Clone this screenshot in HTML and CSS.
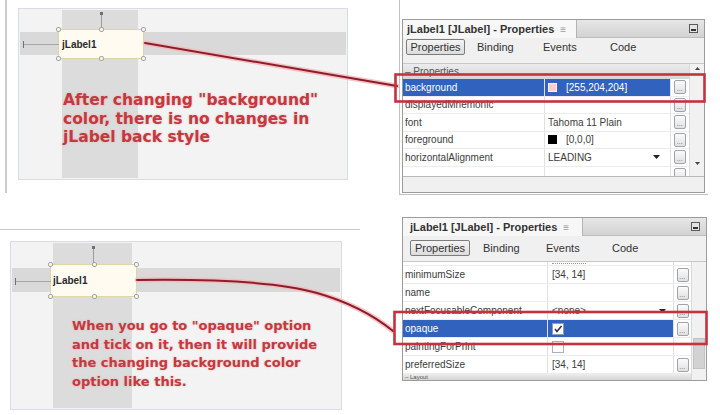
FILE: index.html
```html
<!DOCTYPE html>
<html lang="en">
<head>
<meta charset="utf-8">
<title>jLabel background and opaque</title>
<link rel="stylesheet" href="styles.css">
</head>
<body>
<main class="shot">
  <section class="half">
    <div class="left-a">
      <div class="form form-a">
        <div class="col"></div>
        <div class="band"></div>
        <div class="jlabel">
          <span class="jl-text">jLabel1</span>
          <i class="anc-v"></i><i class="anc-h"></i>
          <i class="hd tl"></i><i class="hd tc"></i><i class="hd tr"></i>
          <i class="hd bl"></i><i class="hd bc"></i><i class="hd br"></i>
        </div>
        <p class="note">After changing "background"<br>color, there is no changes in<br>jLabel back style</p>
      </div>
    </div>
    <div class="right-a">
      <div class="panel panel-a">
        <div class="titlebar">
          <div class="ttab">jLabel1 [JLabel] - Properties<span class="tclose">&#8801;</span></div>
          <div class="tfill"><svg class="minbtn" viewBox="0 0 9 9" width="9" height="9"><rect x="0.5" y="0.5" width="8" height="8" fill="#e4e4e4" stroke="#5a5a5a"/><rect x="2" y="5" width="5" height="2" fill="#333"/></svg></div>
        </div>
        <div class="tabs">
          <span class="tab on">Properties</span><span class="tab">Binding</span><span class="tab">Events</span><span class="tab">Code</span>
        </div>
        <div class="sheet">
          <div class="rows">
            <div class="cat">&#8211; Properties</div>
            <div class="row sel"><span class="n">background</span><span class="v"><i class="sw sw-pink"></i>[255,204,204]</span><span class="b"><i class="btn"></i></span></div>
            <div class="row"><span class="n">displayedMnemonic</span><span class="v"></span><span class="b"><i class="btn"></i></span></div>
            <div class="row"><span class="n">font</span><span class="v">Tahoma 11 Plain</span><span class="b"><i class="btn"></i></span></div>
            <div class="row"><span class="n">foreground</span><span class="v"><i class="sw sw-black"></i>[0,0,0]</span><span class="b"><i class="btn"></i></span></div>
            <div class="row"><span class="n">horizontalAlignment</span><span class="v">LEADING<svg class="dd" viewBox="0 0 7 4" width="7" height="4"><path d="M0 0H7L3.5 4Z" fill="#222"/></svg></span><span class="b"><i class="btn"></i></span></div>
            <div class="row"><span class="n"></span><span class="v"></span><span class="b"><i class="btn"></i></span></div>
          </div>
          <div class="scroll scroll-a">
            <svg viewBox="0 0 5 3" width="5" height="3"><path d="M0 3H5L2.5 0Z" fill="#444"/></svg>
            <svg viewBox="0 0 5 3" width="5" height="3"><path d="M0 0H5L2.5 3Z" fill="#444"/></svg>
          </div>
        </div>
        <div class="desc"></div>
      </div>
    </div>
  </section>

  <section class="half">
    <div class="left-b">
      <div class="hline"></div>
      <div class="form form-b">
        <div class="col"></div>
        <div class="band"></div>
        <div class="jlabel">
          <span class="jl-text">jLabel1</span>
          <i class="anc-v"></i><i class="anc-h"></i>
          <i class="hd tl"></i><i class="hd tc"></i><i class="hd tr"></i>
          <i class="hd bl"></i><i class="hd bc"></i><i class="hd br"></i>
        </div>
        <p class="note">When you go to "opaque" option<br>and tick on it, then it will provide<br>the changing background color<br>option like this.</p>
      </div>
    </div>
    <div class="right-b">
      <div class="panel panel-b">
        <div class="titlebar">
          <div class="ttab">jLabel1 [JLabel] - Properties<span class="tclose">&#8801;</span></div>
          <div class="tfill"><svg class="minbtn" viewBox="0 0 9 9" width="9" height="9"><rect x="0.5" y="0.5" width="8" height="8" fill="#e4e4e4" stroke="#5a5a5a"/><rect x="2" y="5" width="5" height="2" fill="#333"/></svg></div>
        </div>
        <div class="tabs">
          <span class="tab on">Properties</span><span class="tab">Binding</span><span class="tab">Events</span><span class="tab">Code</span>
        </div>
        <div class="sheet">
          <div class="rows">
            <div class="row cut"><span class="n"></span><span class="v"><i class="frag"></i></span><span class="b"></span></div>
            <div class="row"><span class="n">minimumSize</span><span class="v">[34, 14]</span><span class="b"><i class="btn"></i></span></div>
            <div class="row"><span class="n">name</span><span class="v"></span><span class="b"><i class="btn"></i></span></div>
            <div class="row"><span class="n">nextFocusableComponent</span><span class="v">&lt;none&gt;<svg class="dd" viewBox="0 0 7 4" width="7" height="4"><path d="M0 0H7L3.5 4Z" fill="#222"/></svg></span><span class="b"><i class="btn"></i></span></div>
            <div class="row sel"><span class="n">opaque</span><span class="v"><svg class="chk" viewBox="0 0 12 12" width="12" height="12"><rect x="0.5" y="0.5" width="11" height="11" fill="#fff" stroke="#8d9db5"/><path d="M3 6L5 8.5L9.5 3" fill="none" stroke="#333" stroke-width="1.6"/></svg></span><span class="b"><i class="btn"></i></span></div>
            <div class="row"><span class="n">paintingForPrint</span><span class="v"><svg class="chk" viewBox="0 0 12 12" width="12" height="12"><rect x="0.5" y="0.5" width="11" height="11" fill="#fff" stroke="#a8b2c2"/></svg></span><span class="b"></span></div>
            <div class="row"><span class="n">preferredSize</span><span class="v">[34, 14]</span><span class="b"><i class="btn"></i></span></div>
            <div class="cat cat-end">&#8211; Layout</div>
          </div>
          <div class="scroll scroll-b"><i class="thumb"></i></div>
        </div>
      </div>
    </div>
  </section>
</main>

<svg class="overlay" viewBox="0 0 720 415" width="720" height="415">
  <g fill="none" stroke-linecap="round">
    <path d="M145 43 L397 86" stroke="#f2b6ba" stroke-width="5" opacity="0.8"/>
    <path d="M145 43 L397 86" stroke="#8f1d29" stroke-width="2"/>
    <path d="M137 280 C210 279 280 282 317 293 C345 301 372 314 393 331" stroke="#f2b6ba" stroke-width="5" opacity="0.8"/>
    <path d="M137 280 C210 279 280 282 317 293 C345 301 372 314 393 331" stroke="#8f1d29" stroke-width="2"/>
    <rect x="395.5" y="74.5" width="309" height="27" stroke="#c5323e" stroke-width="2.6"/>
    <rect x="394.5" y="312" width="312" height="32" stroke="#c5323e" stroke-width="2.6"/>
  </g>
</svg>
</body>
</html>
```

FILE: styles.css
```css
* { box-sizing: border-box; margin: 0; padding: 0; }

html, body {
  width: 720px;
  height: 415px;
  overflow: hidden;
  background: #fff;
}

body {
  position: relative;
  font-family: "Liberation Sans", Arial, sans-serif;
  color: #3a3a3a;
}

.shot {
  display: grid;
  grid-template-rows: 200px 215px;
  width: 720px;
  height: 415px;
}

.half {
  display: flex;
  align-items: flex-start;
}

/* ---------- top half frames ---------- */
.left-a {
  margin-left: 5px;
  width: 394px;
  height: 193px;
  border-left: 2px solid #cdcdcd;
  padding: 8px 0 0 11px;
}

.right-a {
  width: 309px;
  height: 195px;
  border-left: 1px solid #c4c4c4;
  border-bottom: 1px solid #c4c4c4;
  padding: 19px 0 0 2px;
}

/* ---------- bottom half frames ---------- */
.left-b {
  width: 402px;
  height: 215px;
  padding-top: 29px;
}

.hline {
  width: 360px;
  border-top: 1px solid #c6c6c6;
}

.right-b {
  padding-top: 17px;
}

/* ---------- form designer ---------- */
.form {
  position: relative;
  display: grid;
  border: 1px solid #d8dcea;
  background: #f3f3f4;
  padding: 1px;
}

.form-a {
  width: 330px;
  height: 172px;
  grid-template-columns: 42px 76px 1fr;
  grid-template-rows: 22px 23px 1fr;
}

.form-b {
  margin: 11px 0 0 10px;
  width: 332px;
  height: 169px;
  grid-template-columns: 41px 79px 1fr;
  grid-template-rows: 25px 24px 1fr;
}

.col {
  grid-column: 2;
  grid-row: 1 / 4;
  background: #dcdcdc;
}

.band {
  grid-column: 1 / 4;
  grid-row: 2;
  background: #d9d9d9;
}

.jlabel {
  grid-column: 2;
  grid-row: 2;
  position: relative;
  z-index: 1;
  display: flex;
  align-items: center;
  background: #fffbf1;
  border: 1px solid #e2d5a4;
  font: bold 10px "Liberation Sans", Arial, sans-serif;
  color: #2a2a2a;
}

.form-a .jlabel { margin: -3px -6px -4px -4px; padding-left: 3px; }
.form-b .jlabel { margin: -4px -5px -5px -3px; padding-left: 2px; }

.hd {
  position: absolute;
  width: 5px;
  height: 5px;
  border: 1px solid #a4a4a4;
  border-radius: 2px;
  background: #f7f7f7;
}
.tl { left: -3px; top: -3px; }
.tc { left: calc(50% - 2px); top: -3px; }
.tr { right: -3px; top: -3px; }
.bl { left: -3px; bottom: -3px; }
.bc { left: calc(50% - 2px); bottom: -3px; }
.br { right: -3px; bottom: -3px; }

.anc-v {
  position: absolute;
  left: calc(50% - 0.5px);
  bottom: 100%;
  width: 1px;
  background: #9c9c9c;
}
.form-a .anc-v { height: 18px; }
.form-b .anc-v { height: 19px; }
.anc-v::before {
  content: "";
  position: absolute;
  left: -1px;
  top: 0;
  width: 3px;
  height: 3px;
  background: #6f6f7a;
}

.anc-h {
  position: absolute;
  right: 100%;
  top: 50%;
  width: 36px;
  height: 1px;
  background: #a6a6a6;
}
.anc-h::before {
  content: "";
  position: absolute;
  left: 0;
  top: -3px;
  width: 1px;
  height: 7px;
  background: #707070;
}

.note {
  grid-column: 2 / 4;
  grid-row: 3;
  position: relative;
  z-index: 2;
  font-family: "DejaVu Sans", sans-serif;
  font-weight: bold;
  color: #c23a40;
  line-height: 18.5px;
  white-space: nowrap;
  text-shadow: 0 0 2px rgba(240, 165, 170, 0.9);
}
.form-a .note { font-size: 15.5px; margin-top: 36px; padding-left: 1px; }
.form-b .note { font-size: 13px; margin-top: 25px; padding-left: 19px; }

/* ---------- properties panel ---------- */
.panel {
  display: flex;
  flex-direction: column;
  overflow: hidden;
  border: 1px solid #9c9c9c;
  background: #f0f0f0;
}
.panel-a { width: 303px; height: 174px; }
.panel-b { width: 305px; height: 164px; }

.titlebar {
  flex: none;
  height: 18px;
  display: flex;
}

.ttab {
  background: #f7f7f7;
  border-right: 1px solid #b4b4b4;
  font: bold 11px/18px "Liberation Sans", Arial, sans-serif;
  color: #333;
  white-space: nowrap;
}
.panel-a .ttab { width: 174px; padding-left: 4px; }
.panel-b .ttab { width: 180px; padding-left: 7px; }

.tclose {
  margin-left: 6px;
  font-weight: normal;
  font-size: 10px;
  color: #9a9a9a;
}

.tfill {
  flex: 1;
  display: flex;
  align-items: center;
  justify-content: flex-end;
  padding-right: 6px;
  background: linear-gradient(#e6e6e6, #d3d3d3);
  border-bottom: 1px solid #bdbdbd;
}

.tabs {
  flex: none;
  height: 25px;
  display: grid;
  align-items: start;
  font-size: 11px;
  color: #333;
}
.panel-a .tabs { grid-template-columns: 71px 66px 67px auto; padding: 1px 0 0 3px; }
.panel-b .tabs { grid-template-columns: 73px 63px 66px auto; padding: 4px 0 0 7px; }

.tab {
  height: 16px;
  line-height: 16px;
}
.tab.on {
  border: 1px solid #7c7c7c;
  border-radius: 2px;
  background: linear-gradient(#f4f4f4, #dcdcdc);
  text-align: center;
  line-height: 14px;
}
.panel-a .tab.on { width: 59px; }
.panel-b .tab.on { width: 60px; }

.sheet {
  flex: none;
  display: flex;
  overflow: hidden;
  background: #fff;
  border-top: 1px solid #c8c8c8;
}
.panel-a .sheet { height: 113px; }
.panel-b .sheet { height: 119px; }

.rows {
  flex: 1;
  display: flex;
  flex-direction: column;
  overflow: hidden;
}

.cat {
  flex: none;
  height: 15px;
  padding-left: 2px;
  background: linear-gradient(#ececec, #d5d5d5);
  font-size: 10px;
  line-height: 15px;
  color: #555;
}
.cat-end {
  height: 6px;
  font-size: 6px;
  line-height: 6px;
  overflow: hidden;
}

.row {
  flex: none;
  display: grid;
  border-bottom: 1px solid #ececec;
  font-size: 10px;
  color: #3c3c3c;
}
.panel-a .row { height: 17.5px; grid-template-columns: 142px 126px 1fr; }
.panel-b .row { height: 18px; grid-template-columns: 145px 126px 1fr; }
.panel-b .row.cut { height: 4px; }

.frag {
  align-self: flex-start;
  width: 34px;
  height: 2px;
  margin-top: 1px;
  border-top: 1px dotted #9a9a9a;
}

.n {
  padding-left: 2px;
  display: flex;
  align-items: center;
  white-space: nowrap;
  overflow: hidden;
  border-right: 1px solid #e0e0e0;
}

.v {
  display: flex;
  align-items: center;
  gap: 9px;
  white-space: nowrap;
  overflow: hidden;
  border-right: 1px solid #e0e0e0;
}
.panel-a .v { padding-left: 3px; }
.panel-b .v { padding-left: 4px; }

.b {
  display: flex;
  align-items: center;
  justify-content: center;
}

.btn {
  position: relative;
  width: 12px;
  height: 14px;
  border: 1px solid #9ea4ac;
  border-radius: 2px;
  background: linear-gradient(#fbfbfb, #e1e1e1);
}
.btn::after {
  content: "...";
  position: absolute;
  left: 2px;
  bottom: 1px;
  font-size: 7px;
  line-height: 6px;
  color: #555;
}

.sel .n, .sel .v {
  background: #3162bd;
  color: #fff;
}

.sw {
  flex: none;
  width: 9px;
  height: 9px;
  border: 1px solid #8a8a8a;
}
.sw-pink { background: #ffcccc; border-color: #f4f4f4; }
.sw-black { background: #000; border-color: #000; }

.dd { margin-left: auto; flex: none; }
.panel-a .dd { margin-right: 10px; }
.panel-b .dd { margin-right: 7px; }

.chk { flex: none; }

.scroll {
  flex: none;
  width: 15px;
  display: flex;
  flex-direction: column;
  align-items: center;
  background: #f1f1f1;
  border-left: 1px solid #dadada;
}
.scroll-a {
  justify-content: space-between;
  padding: 3px 0 11px;
}
.scroll-b {
  justify-content: flex-start;
}
.thumb {
  margin-top: 76px;
  width: 12px;
  height: 31px;
  background: #d2d2d2;
  border: 1px solid #c2c2c2;
}

.desc {
  flex: none;
  height: 16px;
  border-top: 1px solid #b8b8b8;
  background: #f0f0f0;
}

/* ---------- annotation overlay ---------- */
.overlay {
  position: absolute;
  left: 0;
  top: 0;
  z-index: 10;
  pointer-events: none;
}
```
